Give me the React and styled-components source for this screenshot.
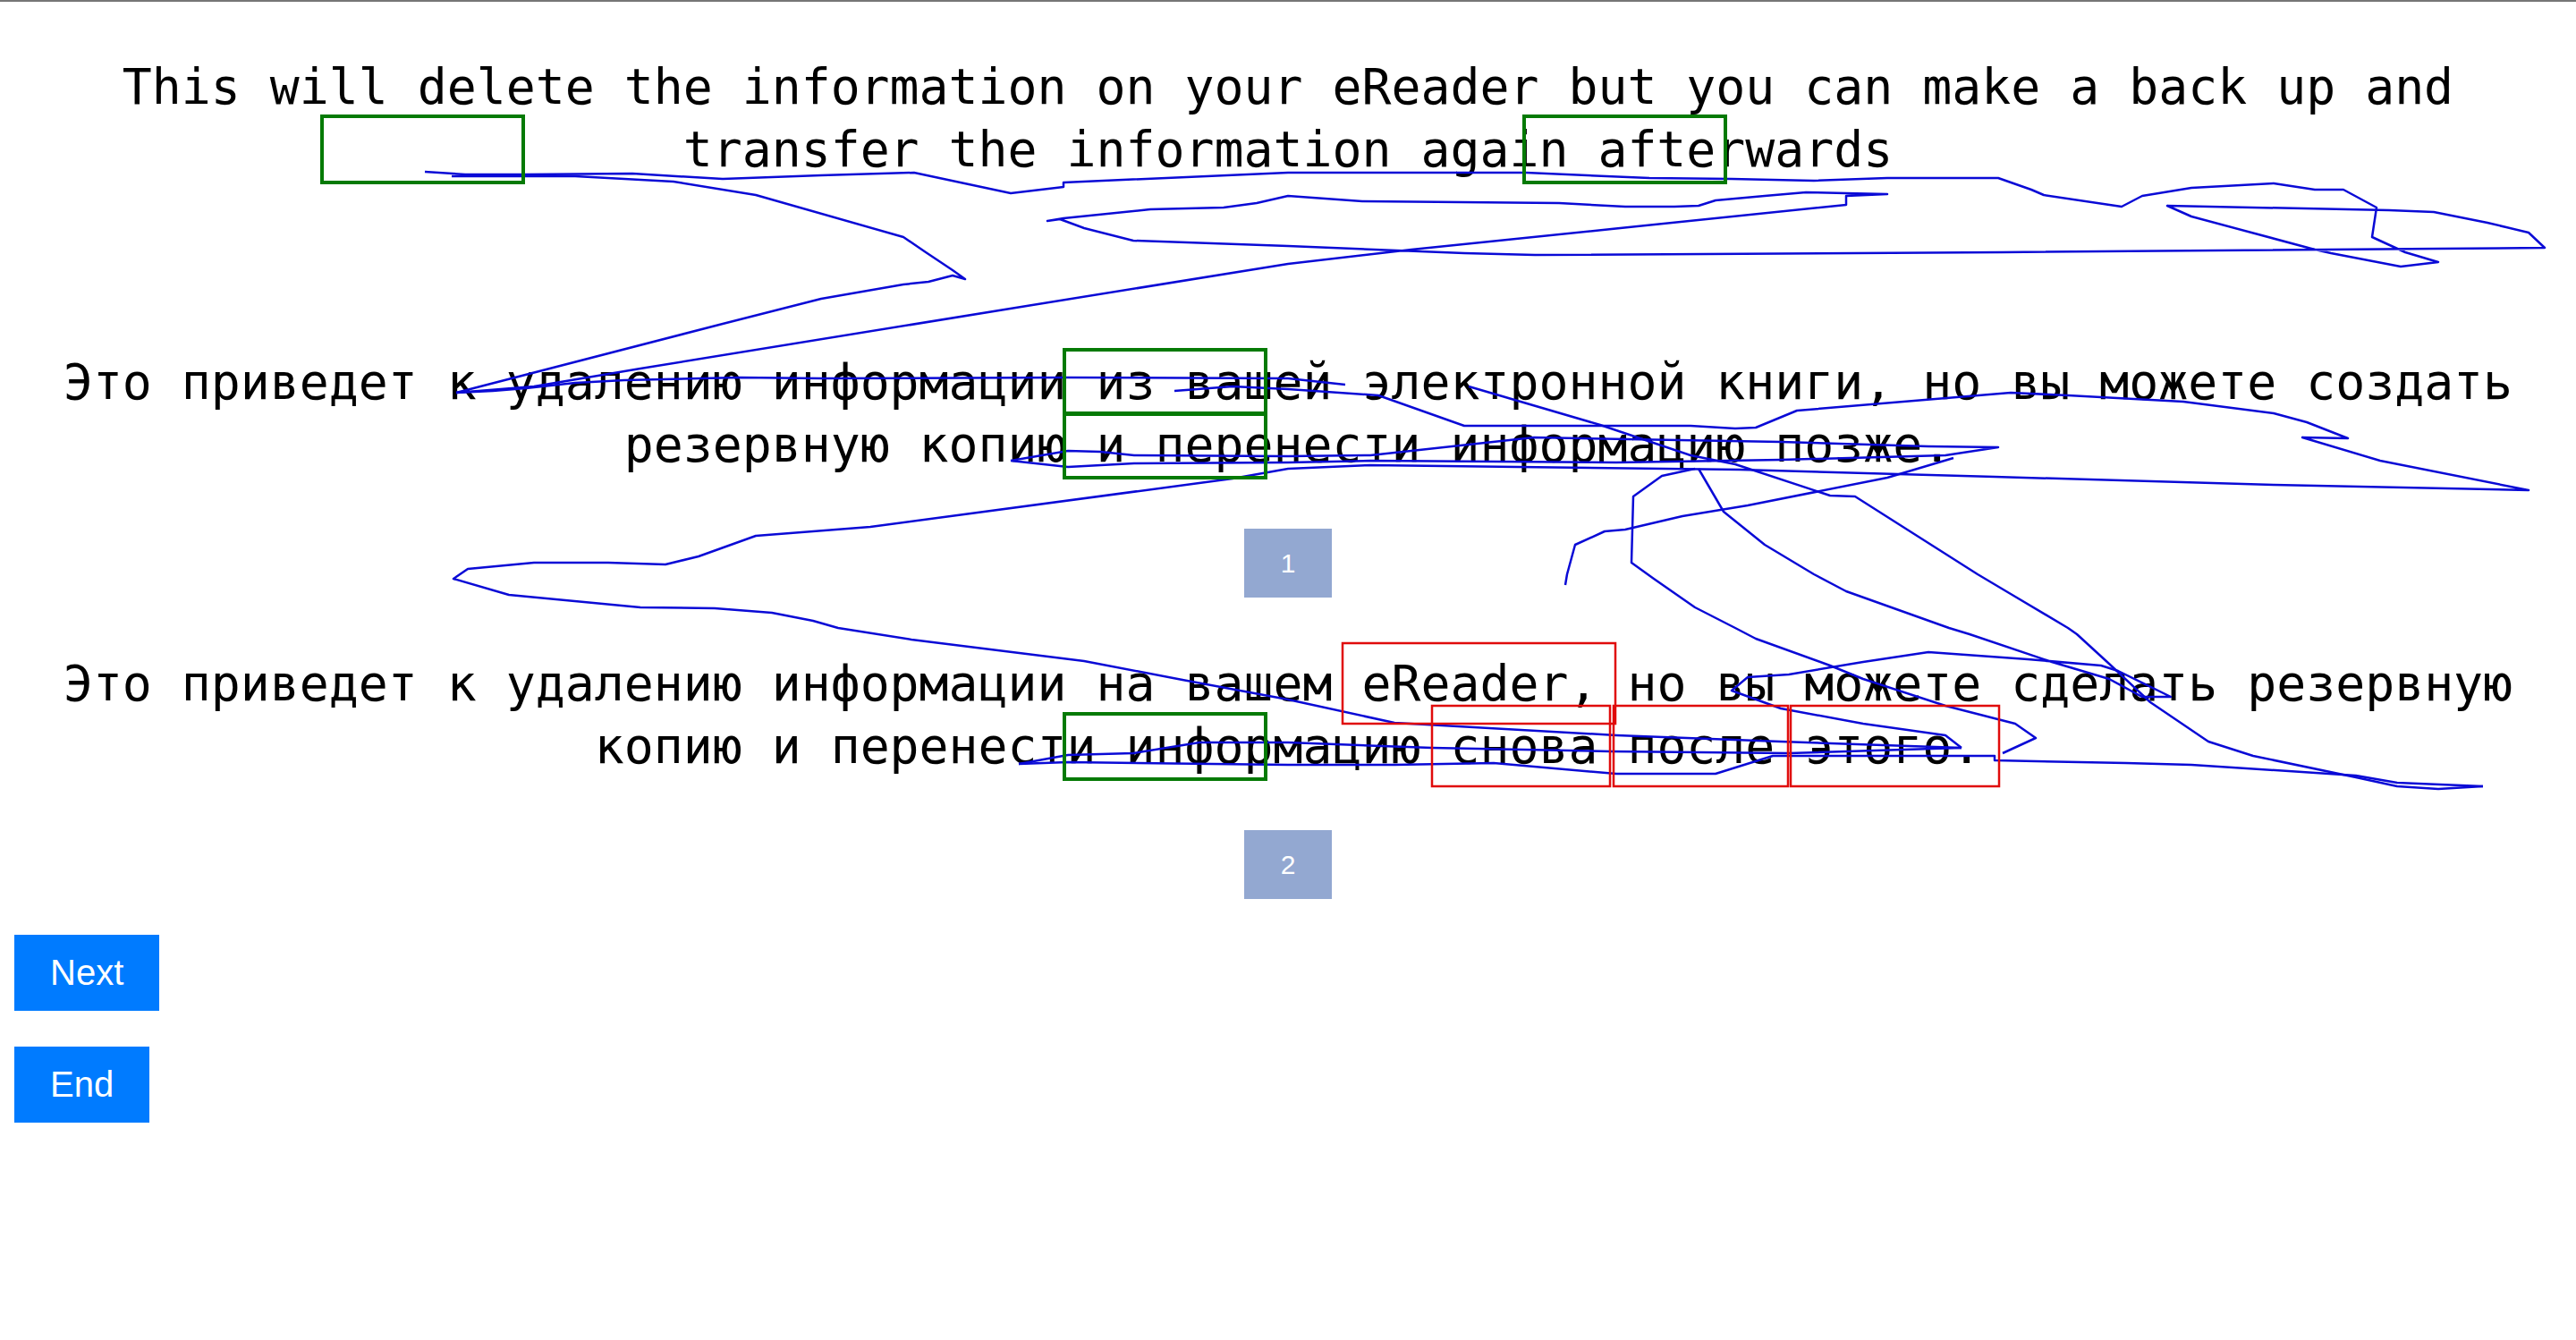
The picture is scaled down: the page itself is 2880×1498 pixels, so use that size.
import React from 'react';
import styled, { createGlobalStyle } from 'styled-components';

const GlobalStyle = createGlobalStyle`
  html, body {
    margin: 0;
    padding: 0;
    background: #ffffff;
  }
`;

const Page = styled.div`
  position: relative;
  width: 2880px;
  min-height: 1498px;
  box-sizing: border-box;
  border-top: 2px solid #767676;
  padding-top: 60px;
  display: flex;
  flex-direction: column;
  align-items: center;
  overflow: hidden;
`;

const Passage = styled.p`
  margin: ${(p) => p.$top || 0}px 0 0;
  width: 100%;
  font-family: "DejaVu Sans Mono", monospace;
  font-size: 54.8px;
  line-height: 70px;
  text-align: center;
  color: #000;
`;

const Badge = styled.div`
  margin-top: 59px;
  width: 98px;
  height: 77px;
  display: flex;
  align-items: center;
  justify-content: center;
  background: #93a8d1;
  color: #ffffff;
  font-family: "Liberation Sans", Arial, sans-serif;
  font-size: 30px;
`;

const Actions = styled.div`
  align-self: flex-start;
  margin: 40px 0 0 16px;
  display: flex;
  flex-direction: column;
  align-items: flex-start;
  gap: 40px;
`;

const ActionButton = styled.button`
  height: 85px;
  padding: 0 40px;
  border: none;
  border-radius: 0;
  background: #007bff;
  color: #ffffff;
  font-family: "Liberation Sans", Arial, sans-serif;
  font-size: 40px;
  cursor: pointer;
`;

const Overlay = styled.svg`
  position: absolute;
  top: 0;
  left: 0;
  pointer-events: none;
`;

const traces = [
  '475,190 520,193 588,193 707,192 808,198 918,194 1022,191 1130,214 1189,207 1189,202 1440,191 1706,191 1844,197 1936,198 2028,200 2110,197 2234,197 2271,210 2285,216 2372,229 2395,217 2450,208 2542,203 2588,210 2620,210 2657,230 2652,263 2689,280 2726,291 2684,296 2606,281 2588,277 2450,240 2423,228 2671,233 2721,235 2781,247 2827,258 2845,275 2726,276 2239,280 1716,283 1637,281 1440,273 1267,267 1212,253 1185,243 1171,245 1189,242 1286,232 1368,230 1405,225 1440,217 1523,223 1743,225 1817,229 1872,229 1899,228 1918,222 1973,217 2019,213 2064,214 2110,215 2064,217 2064,227 1578,277 1440,293 1148,340 716,410 597,430 510,437',
  '505,195 643,195 753,201 845,216 1010,263 1035,280 1065,300 1079,310 1065,306 1038,313 1010,316 918,332 808,360 510,437',
  '510,437 551,435 588,432 643,426 698,423 827,420 918,421 1194,420 1440,421 1504,428',
  '1313,435 1378,430 1440,433 1541,440 1637,474 1890,474 1940,477 1963,476 2009,457 2248,437 2312,440 2441,447 2542,460 2579,470 2625,488 2574,487 2661,513 2827,546 2542,540 2230,531 1945,523 1532,518 1440,522 1378,533 973,587 845,597 781,620 744,629 680,627 597,627 523,634 507,645 569,663 716,677 799,678 863,683 909,692 937,700 1019,713 1212,737 1322,758 1440,780 1559,806 1807,820 1991,827 2193,834',
  '1130,513 1194,502 1230,503 1268,507 1440,508 1532,507 1715,487 1991,492 2156,497 2234,498 2175,507 1991,512 1807,515 1532,513 1440,515 1268,516 1194,520 1130,513',
  '1642,430 1789,473 1890,507 1940,517 2046,552 2074,553 2211,640 2248,662 2312,700 2322,707 2358,740 2404,783 2469,827 2519,843 2634,867 2680,877 2726,880 2776,877',
  '2184,510 2110,532 1954,563 1881,575 1817,590 1794,592 1761,607 1752,640 1750,652',
  '1895,522 1858,530 1826,553 1824,627 1849,645 1895,677 1940,700 1963,712 2046,742 2083,757 2175,787 2253,807 2276,823 2239,840',
  '1899,522 1927,570 1973,607 2028,640 2064,659 2179,700 2202,707 2294,738 2358,757 2395,777 2427,777 2368,748 2349,742 2267,735 2156,727 2083,738 2000,752 1954,755 1936,770 1991,790 2083,807 2175,820 2193,834',
  '1139,852 1194,842 1267,840 1341,828 1440,828 1601,834 1800,838 2000,840 2193,834',
  '1139,852 1194,850 1440,853 1559,853 1670,851 1807,863 1918,863 1982,843 2230,843 2230,848 2377,851 2450,853 2634,865 2680,873 2776,877',
];

const hits = [
  { x: 360, y: 128, w: 225, h: 74 },
  { x: 1704, y: 128, w: 225, h: 74 },
  { x: 1190, y: 389, w: 225, h: 71 },
  { x: 1190, y: 461, w: 225, h: 71 },
  { x: 1190, y: 796, w: 225, h: 73 },
];

const misses = [
  { x: 1501, y: 717, w: 305, h: 90 },
  { x: 1601, y: 787, w: 199, h: 90 },
  { x: 1804, y: 787, w: 195, h: 90 },
  { x: 2002, y: 787, w: 233, h: 90 },
];

const passages = [
  {
    text: 'This will delete the information on your eReader but you can make a back up and transfer the information again afterwards',
    top: 0,
  },
  {
    text: 'Это приведет к удалению информации из вашей электронной книги, но вы можете создать резервную копию и перенести информацию позже.',
    top: 190,
    badge: '1',
  },
  {
    text: 'Это приведет к удалению информации на вашем eReader, но вы можете сделать резервную копию и перенести информацию снова после этого.',
    top: 61,
    badge: '2',
  },
];

const App = () => (
  <>
    <GlobalStyle />
    <Page>
      {passages.map((p) => (
        <React.Fragment key={p.text}>
          <Passage $top={p.top}>{p.text}</Passage>
          {p.badge && <Badge>{p.badge}</Badge>}
        </React.Fragment>
      ))}
      <Actions>
        <ActionButton>Next</ActionButton>
        <ActionButton>End</ActionButton>
      </Actions>

      <Overlay width="2880" height="1498" viewBox="0 0 2880 1498">
        {traces.map((pts, i) => (
          <polyline
            key={i}
            points={pts}
            fill="none"
            stroke="#0a0ad6"
            strokeWidth="2.5"
            strokeLinejoin="round"
          />
        ))}
        {hits.map((b, i) => (
          <rect key={`g${i}`} x={b.x} y={b.y} width={b.w} height={b.h} fill="none" stroke="#057a05" strokeWidth="4" />
        ))}
        {misses.map((b, i) => (
          <rect key={`r${i}`} x={b.x} y={b.y} width={b.w} height={b.h} fill="none" stroke="#e00b0b" strokeWidth="2.5" />
        ))}
      </Overlay>
    </Page>
  </>
);

export default App;
